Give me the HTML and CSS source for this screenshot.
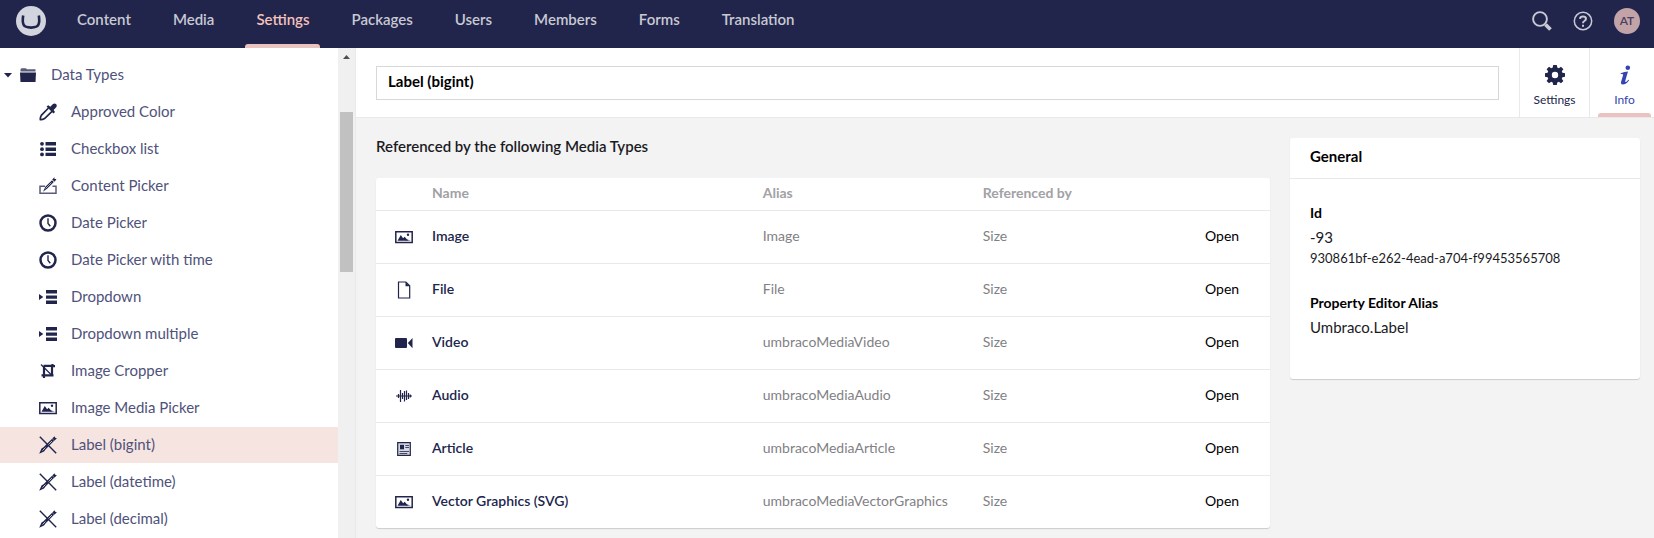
FILE: index.html
```html
<!DOCTYPE html>
<html lang="en">
<head>
<meta charset="utf-8">
<title>Label (bigint) - Umbraco</title>
<link rel="stylesheet" href="styles.css">
</head>
<body>
<svg class="sprite" aria-hidden="true">
  <symbol id="i-folder" viewBox="0 0 18 18"><path d="M1 6.500h16L16.500 16h-15z"/><path d="M1.500 5.500V3.200l1-.9h4.500l.8.900h8.700v2.300z" opacity=".75"/></symbol>
  <symbol id="i-picker" viewBox="0 0 18 18"><path d="M9.500 5 2.300 12.300Q.9 15 1.400 16.700q2 .2 4.200-1.200L13 8.300" fill="none" stroke="currentColor" stroke-width="1.700"/><path d="m7.500 3.600 1.800-1.400 2 1.500L13.700 1.200Q15.600-.2 17 1.100t.2 3.200L14.600 7l1.400 2-1.500 1.500z"/></symbol>
  <symbol id="i-list" viewBox="0 0 18 18"><path d="M6.500 2H17v3.600H6.500zM6.500 7.400H17V11H6.500zM6.500 12.700H17v3.300H6.500z"/><circle cx="3" cy="3.800" r="1.900"/><circle cx="3" cy="9.200" r="1.900"/><circle cx="3" cy="14.400" r="1.900"/></symbol>
  <symbol id="i-content" viewBox="0 0 18 18"><path d="M6 9.300H1v7h16v-7h-3.500" fill="none" stroke="currentColor" stroke-width="1.500" opacity=".75"/><path d="m4 14.700 2.400-5L13 3.300l1.800 1.800-6.500 6.500z"/><path d="m6.500 11.500 6-6" stroke="#fff" stroke-width=".6"/><path d="m13.200 2.600 2.300-2.400v1.700h2L15.700 4.800z"/></symbol>
  <symbol id="i-clock" viewBox="0 0 18 18"><circle cx="9" cy="9" r="7.500" fill="none" stroke="currentColor" stroke-width="2.500"/><path d="M9 4.300V9.500l2.300 2.800" fill="none" stroke="currentColor" stroke-width="1.400"/></symbol>
  <symbol id="i-indent" viewBox="0 0 18 18"><path d="M7 2h11v3.500H7zM7 7.400h11v3.300H7zM7 12.600h11V16H7zM0 6l4.300 3L0 12z"/></symbol>
  <symbol id="i-crop" viewBox="0 0 18 18"><path d="M4.500 3.900H13V13.500H5V16M13.500 2v2.800M2.500 13.300h12M5 4v9.500M13 4.100h3" fill="none" stroke="currentColor" stroke-width="2.200"/><path d="m2 2.500 11 11" stroke="currentColor" stroke-width="1.300"/></symbol>
  <symbol id="i-image" viewBox="0 0 18 18"><path d="M.8 3.700h16.400v10.700H.8z" fill="none" stroke="currentColor" stroke-width="1.500"/><path d="M2.500 12.800 5.800 7l2.300 3.300 1.600-1.600 3 3.500v.6z"/><path d="m10.500 12.800 1.700-1.500 3.600 1.500z" opacity=".7"/><circle cx="13" cy="6.800" r="1.200"/></symbol>
  <symbol id="i-autofill" viewBox="0 0 18 18"><path d="m.8.800 16.400 16.400" fill="none" stroke="currentColor" stroke-width="1.400"/><path d="m.2 17.800 2.300-5.300 2-1.200 8.600-8.500 2 1.900-8.600 8.900-1.500 2z"/><path d="m3.500 14.500 3-3m3-3 3.500-3.500" stroke="#fff" stroke-width=".7"/><path d="m13.300 2.500 2.200-2.300.7 1.500 1.700.6-2.500 2.500z"/></symbol>
  <symbol id="i-file" viewBox="0 0 18 18"><path d="M3.500 1h7.400l3.800 3.800V17H3.500z" fill="none" stroke="currentColor" stroke-width="1.200"/><path d="M10.500 1v4.300h4.300z"/></symbol>
  <symbol id="i-video" viewBox="0 0 18 18"><rect y="4" width="12" height="10" rx="1"/><path d="M12.800 9 17.500 4v10.300z"/></symbol>
  <symbol id="i-audio" viewBox="0 0 18 18"><path d="M1 9h16M3.500 7v4M5.500 3v12M7.500 6v6M9.500 4v10.500M11.500 3.500V13M13.500 6v6M15.300 7.500v3" fill="none" stroke="currentColor" stroke-width="1.200"/></symbol>
  <symbol id="i-article" viewBox="0 0 18 18"><path d="M2.700 2.700h12.600v12.600H2.700z" fill="#d5d6df" stroke="currentColor" stroke-width="1.200"/><path d="M5 4.800h4v4.500H5z"/><path d="M10.300 5.500H14M10.300 7.500H14M4.500 11.500H14M4.500 13.500h7.800" stroke="currentColor" opacity=".8"/></symbol>
</svg>

<header class="topbar">
  <a class="logo" href="#" aria-label="Umbraco"><svg viewBox="0 0 30 30"><circle cx="15" cy="15" r="15" fill="#d2d4de"/><path d="M7.200 9.500Q6.200 15.500 7.500 18.600q1.200 3 7.500 3t7.500-3q1.300-3.100.3-9.100" fill="none" stroke="#21254c" stroke-width="2.600" stroke-linejoin="round"/></svg></a>
  <nav class="sections">
    <a href="#">Content</a><a href="#">Media</a><a class="current" href="#">Settings</a><a href="#">Packages</a><a href="#">Users</a><a href="#">Members</a><a href="#">Forms</a><a href="#">Translation</a>
  </nav>
  <div class="tools">
    <button class="tool" aria-label="Search"><svg viewBox="0 0 20 20" fill="none" stroke="currentColor"><circle cx="8" cy="8" r="6.900" stroke-width="1.900"/><path d="m13.500 13.500 5 5" stroke-width="3.800"/></svg></button>
    <button class="tool" aria-label="Help"><svg viewBox="0 0 20 20" fill="none" stroke="currentColor"><circle cx="10" cy="10" r="8.700" stroke-width="1.500"/><path d="M7 7.800Q7.200 5.500 10 5.500t3 2.300Q13 9 11.400 10 10 10.800 10 12.300" stroke-width="2"/><path d="M9 13.700h2v2H9z" fill="currentColor" stroke="none"/></svg></button>
    <button class="avatar">AT</button>
  </div>
</header>

<div class="workspace">
  <aside class="sidebar">
    <ul class="tree">
      <li class="node root"><svg class="caret" viewBox="0 0 8 5"><path d="M0 0h8L4 4.500z"/></svg><svg class="icon"><use href="#i-folder"/></svg><a href="#">Data Types</a></li>
      <li class="node"><svg class="icon"><use href="#i-picker"/></svg><a href="#">Approved Color</a></li>
      <li class="node"><svg class="icon"><use href="#i-list"/></svg><a href="#">Checkbox list</a></li>
      <li class="node"><svg class="icon"><use href="#i-content"/></svg><a href="#">Content Picker</a></li>
      <li class="node"><svg class="icon"><use href="#i-clock"/></svg><a href="#">Date Picker</a></li>
      <li class="node"><svg class="icon"><use href="#i-clock"/></svg><a href="#">Date Picker with time</a></li>
      <li class="node"><svg class="icon"><use href="#i-indent"/></svg><a href="#">Dropdown</a></li>
      <li class="node"><svg class="icon"><use href="#i-indent"/></svg><a href="#">Dropdown multiple</a></li>
      <li class="node"><svg class="icon"><use href="#i-crop"/></svg><a href="#">Image Cropper</a></li>
      <li class="node"><svg class="icon"><use href="#i-image"/></svg><a href="#">Image Media Picker</a></li>
      <li class="node selected"><svg class="icon"><use href="#i-autofill"/></svg><a href="#">Label (bigint)</a></li>
      <li class="node"><svg class="icon"><use href="#i-autofill"/></svg><a href="#">Label (datetime)</a></li>
      <li class="node"><svg class="icon"><use href="#i-autofill"/></svg><a href="#">Label (decimal)</a></li>
    </ul>
    <div class="scrollbar"><svg class="up" viewBox="0 0 7 4"><path d="M0 4 3.500 0 7 4z"/></svg><div class="thumb"></div></div>
  </aside>

  <main class="editor">
    <div class="editor-head">
      <input class="title" type="text" aria-label="Name" value="Label (bigint)">
      <div class="apps">
        <button class="app"><svg viewBox="0 0 20 20"><path fill-rule="evenodd" d="M8.200 0h3.600l.5 2.600 1.500.6L16 1.700 18.400 4.200l-1.600 2.100.6 1.500 2.600.5v3.500l-2.600.5-.6 1.500 1.600 2.100L16 18.300l-2.200-1.500-1.500.6-.5 2.600H8.200l-.5-2.600-1.500-.6L4 18.300l-2.400-2.400 1.600-2.100-.6-1.500L0 11.800V8.300l2.600-.5.6-1.500L1.600 4.200 4 1.700l2.200 1.500 1.500-.6zM10 6.800a3.200 3.200 0 1 0 0 6.400 3.200 3.200 0 0 0 0-6.400z"/></svg><span>Settings</span></button>
        <button class="app active"><svg viewBox="0 0 20 20"><circle cx="12.800" cy="2.700" r="2.300"/><path d="M5.800 8.200Q9.500 6.500 13 6.400L10.300 15.800q-.3 1.400.5 1.300.9-.2 2.500-2.300l.8.500Q11 19.700 7.700 19.600 5.500 19.500 6.100 16.800L8.200 9.700Q8.300 8.800 5.600 9.100z"/></svg><span>Info</span></button>
      </div>
    </div>
    <div class="editor-body">
      <section class="references">
        <h5>Referenced by the following Media Types</h5>
        <table class="panel">
          <colgroup><col class="c-icon"><col class="c-name"><col class="c-alias"><col><col class="c-open"></colgroup>
          <thead><tr><th></th><th>Name</th><th>Alias</th><th>Referenced by</th><th></th></tr></thead>
          <tbody>
            <tr><td><svg class="icon"><use href="#i-image"/></svg></td><td class="name">Image</td><td>Image</td><td>Size</td><td><a href="#">Open</a></td></tr>
            <tr><td><svg class="icon"><use href="#i-file"/></svg></td><td class="name">File</td><td>File</td><td>Size</td><td><a href="#">Open</a></td></tr>
            <tr><td><svg class="icon"><use href="#i-video"/></svg></td><td class="name">Video</td><td>umbracoMediaVideo</td><td>Size</td><td><a href="#">Open</a></td></tr>
            <tr><td><svg class="icon"><use href="#i-audio"/></svg></td><td class="name">Audio</td><td>umbracoMediaAudio</td><td>Size</td><td><a href="#">Open</a></td></tr>
            <tr><td><svg class="icon"><use href="#i-article"/></svg></td><td class="name">Article</td><td>umbracoMediaArticle</td><td>Size</td><td><a href="#">Open</a></td></tr>
            <tr><td><svg class="icon"><use href="#i-image"/></svg></td><td class="name">Vector Graphics (SVG)</td><td>umbracoMediaVectorGraphics</td><td>Size</td><td><a href="#">Open</a></td></tr>
          </tbody>
        </table>
      </section>
      <section class="panel general">
        <h2>General</h2>
        <dl>
          <dt>Id</dt><dd>-93</dd><dd class="guid">930861bf-e262-4ead-a704-f99453565708</dd>
          <dt>Property Editor Alias</dt><dd>Umbraco.Label</dd>
        </dl>
      </section>
    </div>
  </main>
</div>
</body>
</html>
```
FILE: styles.css
```css
* { box-sizing: border-box; }
:root { --navy: #21254c; --pink: #e8c3bf; --line: #e9e9eb; }
body {
  margin: 0;
  height: 100vh;
  display: flex;
  flex-direction: column;
  overflow: hidden;
  font: 15px/20px Lato, "Liberation Sans", sans-serif;
  color: #1b1b1f;
  background: #f3f3f3;
}
a { color: inherit; text-decoration: none; }
button { border: 0; padding: 0; background: none; font: inherit; color: inherit; }
svg { display: block; fill: currentColor; }
.sprite { position: absolute; width: 0; height: 0; }

.topbar {
  flex: none;
  height: 48px;
  display: flex;
  align-items: center;
  padding: 0 14px 0 16px;
  background: var(--navy);
  color: #c8c9d3;
}
.logo { width: 30px; margin-bottom: 6px; }
.sections { display: flex; align-self: stretch; margin-left: 10px; font-weight: 600; }
.sections a { position: relative; padding: 9px 21px 0; }
.sections .current { color: #f5c1bc; }
.sections .current::after {
  content: "";
  position: absolute;
  left: 10px; right: 10px; bottom: 0;
  height: 4px;
  border-radius: 3px 3px 0 0;
  background: var(--pink);
}
.tools { display: flex; align-items: center; gap: 21px; margin: 0 0 6px auto; }
.tool svg { width: 20px; height: 20px; fill: none; }
.avatar {
  width: 26px; height: 26px;
  border-radius: 50%;
  background: #c2a4a8;
  color: #4a3f5f;
  font-size: 12px;
  font-weight: 600;
}

.workspace { flex: 1; min-height: 0; display: flex; }
.sidebar {
  flex: none;
  width: 356px;
  display: flex;
  overflow: hidden;
  border-right: 1px solid var(--line);
  background: #fff;
  color: #4f527a;
}
.tree { flex: 1; margin: 0; padding: 9px 0 0; list-style: none; }
.node {
  height: 36px;
  margin-bottom: 1px;
  display: flex;
  align-items: center;
  gap: 14px;
  padding-left: 39px;
}
.node a { padding-bottom: 2px; }
.root { padding-left: 4px; }
.caret { width: 8px; height: 5px; margin-right: -7px; color: var(--navy); }
.selected { background: #f6e4e1; }
.icon { flex: none; width: 18px; height: 18px; color: var(--navy); }
.scrollbar { width: 17px; padding: 7px 2px 0; background: #f0f0f0; }
.up { width: 7px; height: 4px; margin: 0 auto 53px; color: #505050; }
.thumb { height: 160px; background: #c1c1c1; }

/* The editor runs slightly past the window edge, so its last tab is cut off. */
.editor { flex: 1; min-width: 0; margin-right: -6px; display: flex; flex-direction: column; }
.editor-head {
  flex: none;
  height: 70px;
  display: flex;
  align-items: center;
  padding-left: 20px;
  border-bottom: 1px solid var(--line);
  background: #fff;
}
.title {
  flex: 1;
  height: 34px;
  margin-right: 20px;
  padding: 0 11px 4px;
  border: 1px solid #d8d7d9;
  font: 700 15px/20px Lato, "Liberation Sans", sans-serif;
  color: #000;
}
.apps { display: flex; align-self: stretch; border-right: 1px solid var(--line); }
.app {
  position: relative;
  width: 70px;
  display: flex;
  flex-direction: column;
  align-items: center;
  gap: 5px;
  padding-top: 17px;
  border-left: 1px solid var(--line);
  font-size: 12px;
  color: var(--navy);
}
.app svg { width: 20px; height: 20px; }
.active { color: #3544b1; }
.active::after {
  content: "";
  position: absolute;
  left: 8px; right: 8px; bottom: 0;
  height: 4px;
  border-radius: 3px 3px 0 0;
  background: var(--pink);
}

.editor-body {
  display: grid;
  grid-template-columns: minmax(0, 1fr) 350px;
  align-items: start;
  gap: 20px;
  padding: 20px;
}
.references h5 { margin: 0; height: 40px; font-size: 15px; font-weight: 600; line-height: 16px; }
.panel { border-radius: 3px; background: #fff; box-shadow: 0 1px 1px rgba(0, 0, 0, .16); }
table { width: 100%; table-layout: fixed; border-spacing: 0; font-size: 14px; }
.c-icon { width: 56px; }
.c-name { width: 37%; }
.c-alias { width: 220px; }
.c-open { width: 65px; }
th { height: 33px; padding: 0 0 2px; border-bottom: 1px solid var(--line); text-align: left; font-weight: 700; color: #a2a1a6; }
td { height: 53px; padding: 0 0 2px; border-bottom: 1px solid var(--line); color: #817f85; }
td:first-child { padding-bottom: 0; }
tbody tr:last-child td { height: 52px; border-bottom: 0; }
td .icon { margin-left: 19px; }
td a { color: #000; }
.name { font-weight: 600; color: var(--navy); }
.general h2 { margin: 0; padding: 8px 20px 12px; border-bottom: 1px solid var(--line); font-size: 15px; line-height: 20px; font-weight: 700; color: #000; }
.general dl { margin: 0; padding: 22px 20px 16px; }
dt { font-size: 14px; font-weight: 700; line-height: 24px; color: #000; }
dd { margin: 0; line-height: 24px; }
dd.guid { font-size: 13px; line-height: 18px; }
dd + dt { margin-top: 24px; }
dd:last-child { margin-bottom: 24px; }
```
